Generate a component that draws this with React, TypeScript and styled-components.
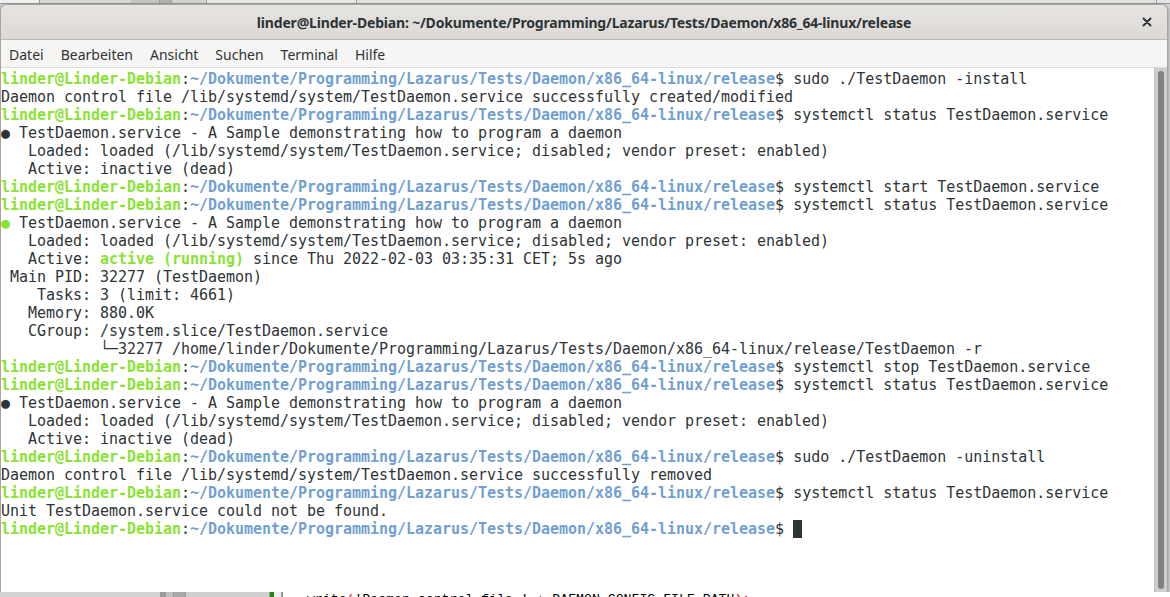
import React from "react";
import styled, { createGlobalStyle } from "styled-components";

const GlobalStyle = createGlobalStyle`
  *, *::before, *::after { box-sizing: border-box; }
  html, body { margin: 0; padding: 0; }
  body { width: 1170px; height: 597px; overflow: hidden; background: #c8c8c8; }
`;

const Desktop = styled.div`
  width: 1170px;
  height: 597px;
  display: flex;
  flex-direction: column;
  overflow: hidden;
  background: #d0d0d0;
`;

const TopStrip = styled.div`
  height: 4px;
  flex: none;
  display: flex;
  background: #e4e4e4;
  border-bottom: 1px solid #9a9a9a;
`;

const StripPiece = styled.div<{ $w: number; $bg: string; $border?: string }>`
  width: ${(p) => p.$w}px;
  flex: none;
  background: ${(p) => p.$bg};
  border-right: 1px solid ${(p) => p.$border ?? "#9c9c9c"};
`;

const WindowRow = styled.div`
  height: 588px;
  flex: none;
  display: flex;
`;

const Window = styled.div`
  width: 1168px;
  flex: none;
  display: flex;
  flex-direction: column;
  border-radius: 7px 7px 0 0;
  border: 1px solid #a9a49e;
  border-bottom: none;
  overflow: hidden;
  background: #f6f5f4;
  box-shadow: 0 1px 3px rgba(0, 0, 0, 0.35);
`;

const TitleBar = styled.header`
  height: 35px;
  flex: none;
  display: grid;
  grid-template-columns: 1fr auto 1fr;
  align-items: center;
  background: linear-gradient(#e6e4e1, #dcd9d5);
  border-bottom: 1px solid #bfb8b1;
  font-family: "Noto Sans", "DejaVu Sans", sans-serif;
  color: #2e3436;
`;

const Title = styled.h1`
  grid-column: 2;
  margin: 0;
  font-size: 14px;
  font-weight: 700;
  letter-spacing: -0.18px;
  white-space: nowrap;
`;

const CloseButton = styled.div`
  grid-column: 3;
  justify-self: end;
  margin-right: 12px;
  width: 16px;
  height: 16px;
  display: flex;
  align-items: center;
  justify-content: center;
  color: #2e3436;
`;

const MenuBar = styled.nav`
  height: 28px;
  flex: none;
  display: flex;
  align-items: center;
  padding: 2px 0 0 8px;
  gap: 17px;
  background: #f6f5f4;
  border-bottom: 1px solid #dedbd7;
  font-family: "Noto Sans", "DejaVu Sans", sans-serif;
  font-size: 14px;
  color: #2e3436;
`;

const MenuItem = styled.span`
  white-space: nowrap;
`;

const TerminalArea = styled.div`
  flex: 1;
  display: flex;
  min-height: 0;
  background: #ffffff;
`;

const Screen = styled.div`
  flex: 1;
  padding: 2px 0 0 0;
  background: #ffffff;
  font-family: "DejaVu Sans Mono", "Liberation Mono", monospace;
  font-size: 15px;
  letter-spacing: -0.03px;
  color: #2e3436;
  overflow: hidden;
`;

const Line = styled.div`
  height: 18px;
  line-height: 18px;
  white-space: pre;
`;

const User = styled.span`
  color: #8ae234;
  font-weight: 700;
`;

const Path = styled.span`
  color: #729fcf;
  font-weight: 700;
`;

const Good = styled.span`
  color: #8ae234;
  font-weight: 700;
`;

const Dot = styled.span<{ $ok?: boolean }>`
  color: ${(p) => (p.$ok ? "#8ae234" : "#2e3436")};
`;

const Cursor = styled.span`
  display: inline-block;
  width: 9px;
  height: 18px;
  vertical-align: top;
  background: #2e3436;
`;

const Scrollbar = styled.div`
  width: 13px;
  flex: none;
  display: flex;
  justify-content: center;
  padding: 3px 0 3px;
  background: #cecece;
  border-left: 1px solid #c2c2c2;
`;

const Thumb = styled.div`
  width: 6px;
  border-radius: 3px;
  background: #7f8182;
`;

const BottomStrip = styled.div`
  height: 5px;
  flex: none;
  display: flex;
  overflow: hidden;
  background: linear-gradient(#d6d6d6, #bdbdbd);
`;

const CodePeek = styled.div`
  width: 900px;
  flex: none;
  background: #ffffff;
  border-left: 1px solid #8c8c8c;
  padding: 1px 0 0 24px;
  overflow: hidden;
  font-family: "Liberation Mono", monospace;
  font-size: 13.2px;
  line-height: 14px;
  white-space: pre;
  color: #000;
`;

const Red = styled.span`
  color: #d00000;
`;

const PROMPT_PATH = "~/Dokumente/Programming/Lazarus/Tests/Daemon/x86_64-linux/release";

const Prompt: React.FC<{ cmd?: string; cursor?: boolean }> = ({ cmd, cursor }) => (
  <Line>
    <User>linder@Linder-Debian</User>:<Path>{PROMPT_PATH}</Path>${" "}
    {cmd}
    {cursor && <Cursor />}
  </Line>
);

const App: React.FC = () => {
  return (
    <>
      <GlobalStyle />
      <Desktop>
        <TopStrip>
          <StripPiece $w={40} $bg="#f0f0f0" />
          <StripPiece $w={90} $bg="#d8d8d8" $border="#d8d8d8" />
          <StripPiece $w={30} $bg="#c4c4c4" />
          <StripPiece $w={12} $bg="#b0b0b0" />
          <StripPiece $w={35} $bg="#d2d2d2" />
          <StripPiece $w={150} $bg="#e8e8e8" />
          <StripPiece $w={800} $bg="#e0e0e0" />
        </TopStrip>
        <WindowRow>
          <Window>
            <TitleBar>
              <Title>linder@Linder-Debian: ~/Dokumente/Programming/Lazarus/Tests/Daemon/x86_64-linux/release</Title>
              <CloseButton>
                <svg width="10" height="10" viewBox="0 0 10 10">
                  <path d="M1.5 1.5 L8.5 8.5 M8.5 1.5 L1.5 8.5" stroke="#2e3436" strokeWidth="2" strokeLinecap="round" />
                </svg>
              </CloseButton>
            </TitleBar>
            <MenuBar>
              <MenuItem>Datei</MenuItem>
              <MenuItem>Bearbeiten</MenuItem>
              <MenuItem>Ansicht</MenuItem>
              <MenuItem>Suchen</MenuItem>
              <MenuItem>Terminal</MenuItem>
              <MenuItem>Hilfe</MenuItem>
            </MenuBar>
            <TerminalArea>
              <Screen>
                <Prompt cmd="sudo ./TestDaemon -install" />
                <Line>Daemon control file /lib/systemd/system/TestDaemon.service successfully created/modified</Line>
                <Prompt cmd="systemctl status TestDaemon.service" />
                <Line><Dot>●</Dot> TestDaemon.service - A Sample demonstrating how to program a daemon</Line>
                <Line>   Loaded: loaded (/lib/systemd/system/TestDaemon.service; disabled; vendor preset: enabled)</Line>
                <Line>   Active: inactive (dead)</Line>
                <Prompt cmd="systemctl start TestDaemon.service" />
                <Prompt cmd="systemctl status TestDaemon.service" />
                <Line><Dot $ok>●</Dot> TestDaemon.service - A Sample demonstrating how to program a daemon</Line>
                <Line>   Loaded: loaded (/lib/systemd/system/TestDaemon.service; disabled; vendor preset: enabled)</Line>
                <Line>   Active: <Good>active (running)</Good> since Thu 2022-02-03 03:35:31 CET; 5s ago</Line>
                <Line> Main PID: 32277 (TestDaemon)</Line>
                <Line>    Tasks: 3 (limit: 4661)</Line>
                <Line>   Memory: 880.0K</Line>
                <Line>   CGroup: /system.slice/TestDaemon.service</Line>
                <Line>           └─32277 /home/linder/Dokumente/Programming/Lazarus/Tests/Daemon/x86_64-linux/release/TestDaemon -r</Line>
                <Prompt cmd="systemctl stop TestDaemon.service" />
                <Prompt cmd="systemctl status TestDaemon.service" />
                <Line><Dot>●</Dot> TestDaemon.service - A Sample demonstrating how to program a daemon</Line>
                <Line>   Loaded: loaded (/lib/systemd/system/TestDaemon.service; disabled; vendor preset: enabled)</Line>
                <Line>   Active: inactive (dead)</Line>
                <Prompt cmd="sudo ./TestDaemon -uninstall" />
                <Line>Daemon control file /lib/systemd/system/TestDaemon.service successfully removed</Line>
                <Prompt cmd="systemctl status TestDaemon.service" />
                <Line>Unit TestDaemon.service could not be found.</Line>
                <Prompt cursor />
              </Screen>
              <Scrollbar>
                <Thumb style={{ height: "100%" }} />
              </Scrollbar>
            </TerminalArea>
          </Window>
        </WindowRow>
        <BottomStrip>
          <StripPiece $w={160} $bg="#d4d4d4" $border="#d4d4d4" />
          <StripPiece $w={6} $bg="#9a9a9a" />
          <StripPiece $w={8} $bg="#c0c0c0" />
          <StripPiece $w={12} $bg="#a8a8a8" />
          <StripPiece $w={84} $bg="#cfcfcf" />
          <StripPiece $w={4} $bg="#1a8a1a" $border="#1a8a1a" />
          <StripPiece $w={8} $bg="#f0f0f0" />
          <CodePeek>
            write<Red>(</Red>'Daemon control file ' <Red>+</Red> DAEMON_CONFIG_FILE_PATH<Red>);</Red>
          </CodePeek>
        </BottomStrip>
      </Desktop>
    </>
  );
};

export default App;
